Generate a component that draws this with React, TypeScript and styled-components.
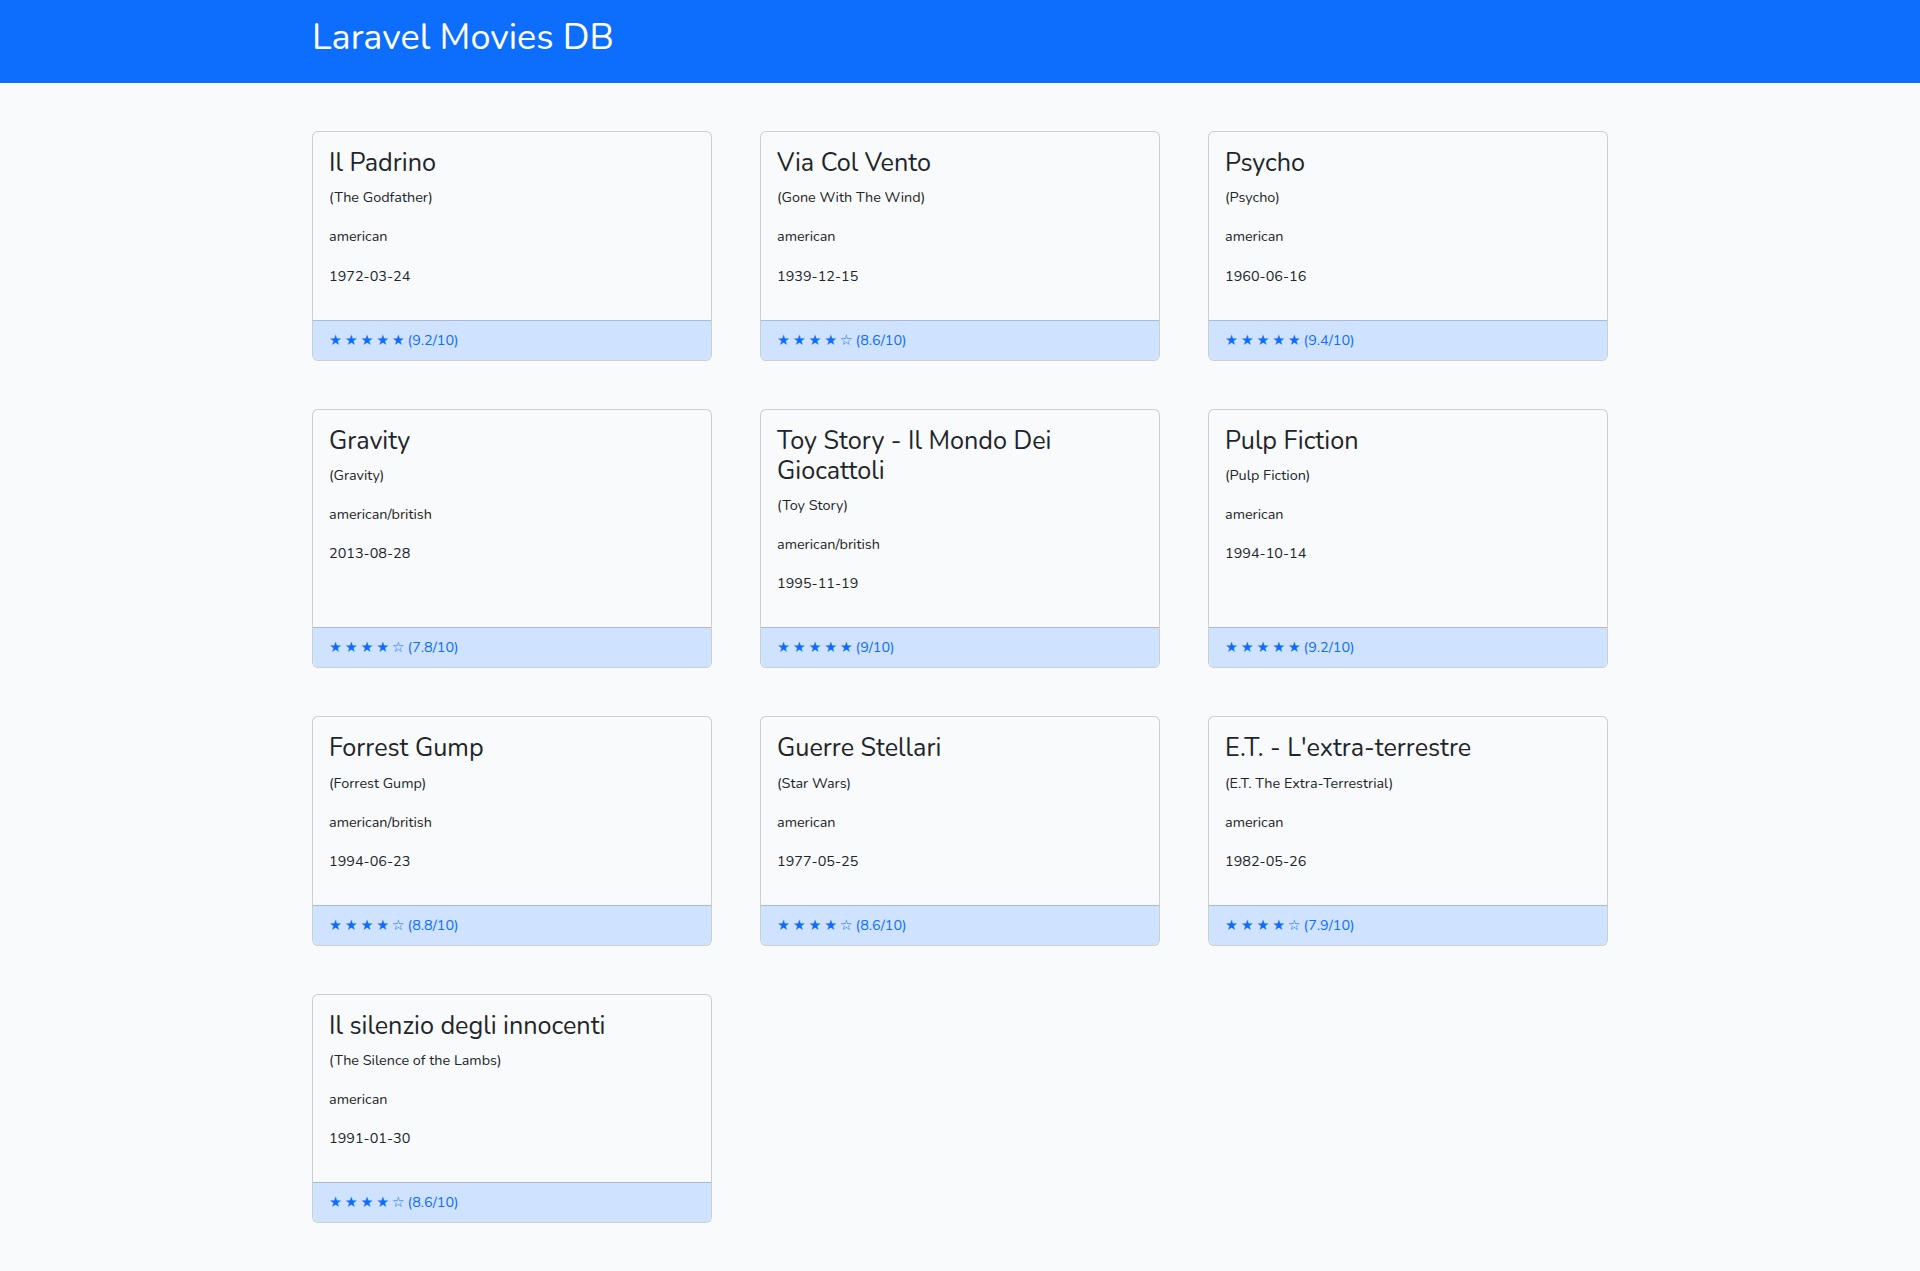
import React from "react";
import styled, { createGlobalStyle } from "styled-components";

const GlobalStyle = createGlobalStyle`
  *, *::before, *::after { box-sizing: border-box; }
  body {
    margin: 0;
    background: #f8fafc;
    color: #212529;
    font-family: Nunito, Lato, "DejaVu Sans", sans-serif;
    font-size: 14.4px;
    line-height: 1.6;
  }
`;

type Movie = {
  title: string;
  original: string;
  nationality: string;
  date: string;
  vote: number;
};

const movies: Movie[] = [
  { title: "Il Padrino", original: "The Godfather", nationality: "american", date: "1972-03-24", vote: 9.2 },
  { title: "Via Col Vento", original: "Gone With The Wind", nationality: "american", date: "1939-12-15", vote: 8.6 },
  { title: "Psycho", original: "Psycho", nationality: "american", date: "1960-06-16", vote: 9.4 },
  { title: "Gravity", original: "Gravity", nationality: "american/british", date: "2013-08-28", vote: 7.8 },
  { title: "Toy Story - Il Mondo Dei Giocattoli", original: "Toy Story", nationality: "american/british", date: "1995-11-19", vote: 9 },
  { title: "Pulp Fiction", original: "Pulp Fiction", nationality: "american", date: "1994-10-14", vote: 9.2 },
  { title: "Forrest Gump", original: "Forrest Gump", nationality: "american/british", date: "1994-06-23", vote: 8.8 },
  { title: "Guerre Stellari", original: "Star Wars", nationality: "american", date: "1977-05-25", vote: 8.6 },
  { title: "E.T. - L'extra-terrestre", original: "E.T. The Extra-Terrestrial", nationality: "american", date: "1982-05-26", vote: 7.9 },
  { title: "Il silenzio degli innocenti", original: "The Silence of the Lambs", nationality: "american", date: "1991-01-30", vote: 8.6 },
];

const Header = styled.header`
  background: #0d6efd;
  padding: 16px 0;
`;

const Container = styled.div`
  max-width: 1320px;
  margin: 0 auto;
  padding: 0 12px;
`;

const Brand = styled.h1`
  margin: 0 0 8px;
  color: #fff;
  font-size: 36px;
  font-weight: 400;
  line-height: 1.2;
`;

const Main = styled.main`
  padding: 48px 0;
`;

const Grid = styled.div`
  display: grid;
  grid-template-columns: repeat(3, 1fr);
  gap: 48px;
`;

const Card = styled.article`
  display: flex;
  flex-direction: column;
  background: #f9fafb;
  border: 1px solid rgba(0, 0, 0, 0.175);
  border-radius: 6px;
  overflow: hidden;
`;

const CardBody = styled.div`
  flex: 1 1 auto;
  padding: 16px;
`;

const CardTitle = styled.h3`
  margin: 0 0 8px;
  font-size: 25.2px;
  font-weight: 400;
  line-height: 1.2;
`;

const Text = styled.p`
  margin: 0 0 16px;
`;

const CardFooter = styled.footer`
  background: #cfe2ff;
  border-top: 1px solid rgba(0, 0, 0, 0.175);
  padding: 8px 16px;
  color: #0d6efd;
`;

const Stars = styled.span`
  letter-spacing: -0.45px;
`;

function stars(vote: number) {
  const full = Math.round(vote / 2);
  const arr: string[] = [];
  for (let i = 0; i < 5; i++) arr.push(i < full ? "★" : "☆");
  return arr.join(" ") + " ";
}

export default function App() {
  return (
    <>
      <GlobalStyle />
      <Header>
        <Container>
          <Brand>Laravel Movies DB</Brand>
        </Container>
      </Header>
      <Main>
        <Container>
          <Grid>
            {movies.map((m) => (
              <Card key={m.title}>
                <CardBody>
                  <CardTitle>{m.title}</CardTitle>
                  <Text>({m.original})</Text>
                  <Text>{m.nationality}</Text>
                  <Text>{m.date}</Text>
                </CardBody>
                <CardFooter>
                  <Stars>{stars(m.vote)}</Stars>({m.vote}/10)
                </CardFooter>
              </Card>
            ))}
          </Grid>
        </Container>
      </Main>
    </>
  );
}
